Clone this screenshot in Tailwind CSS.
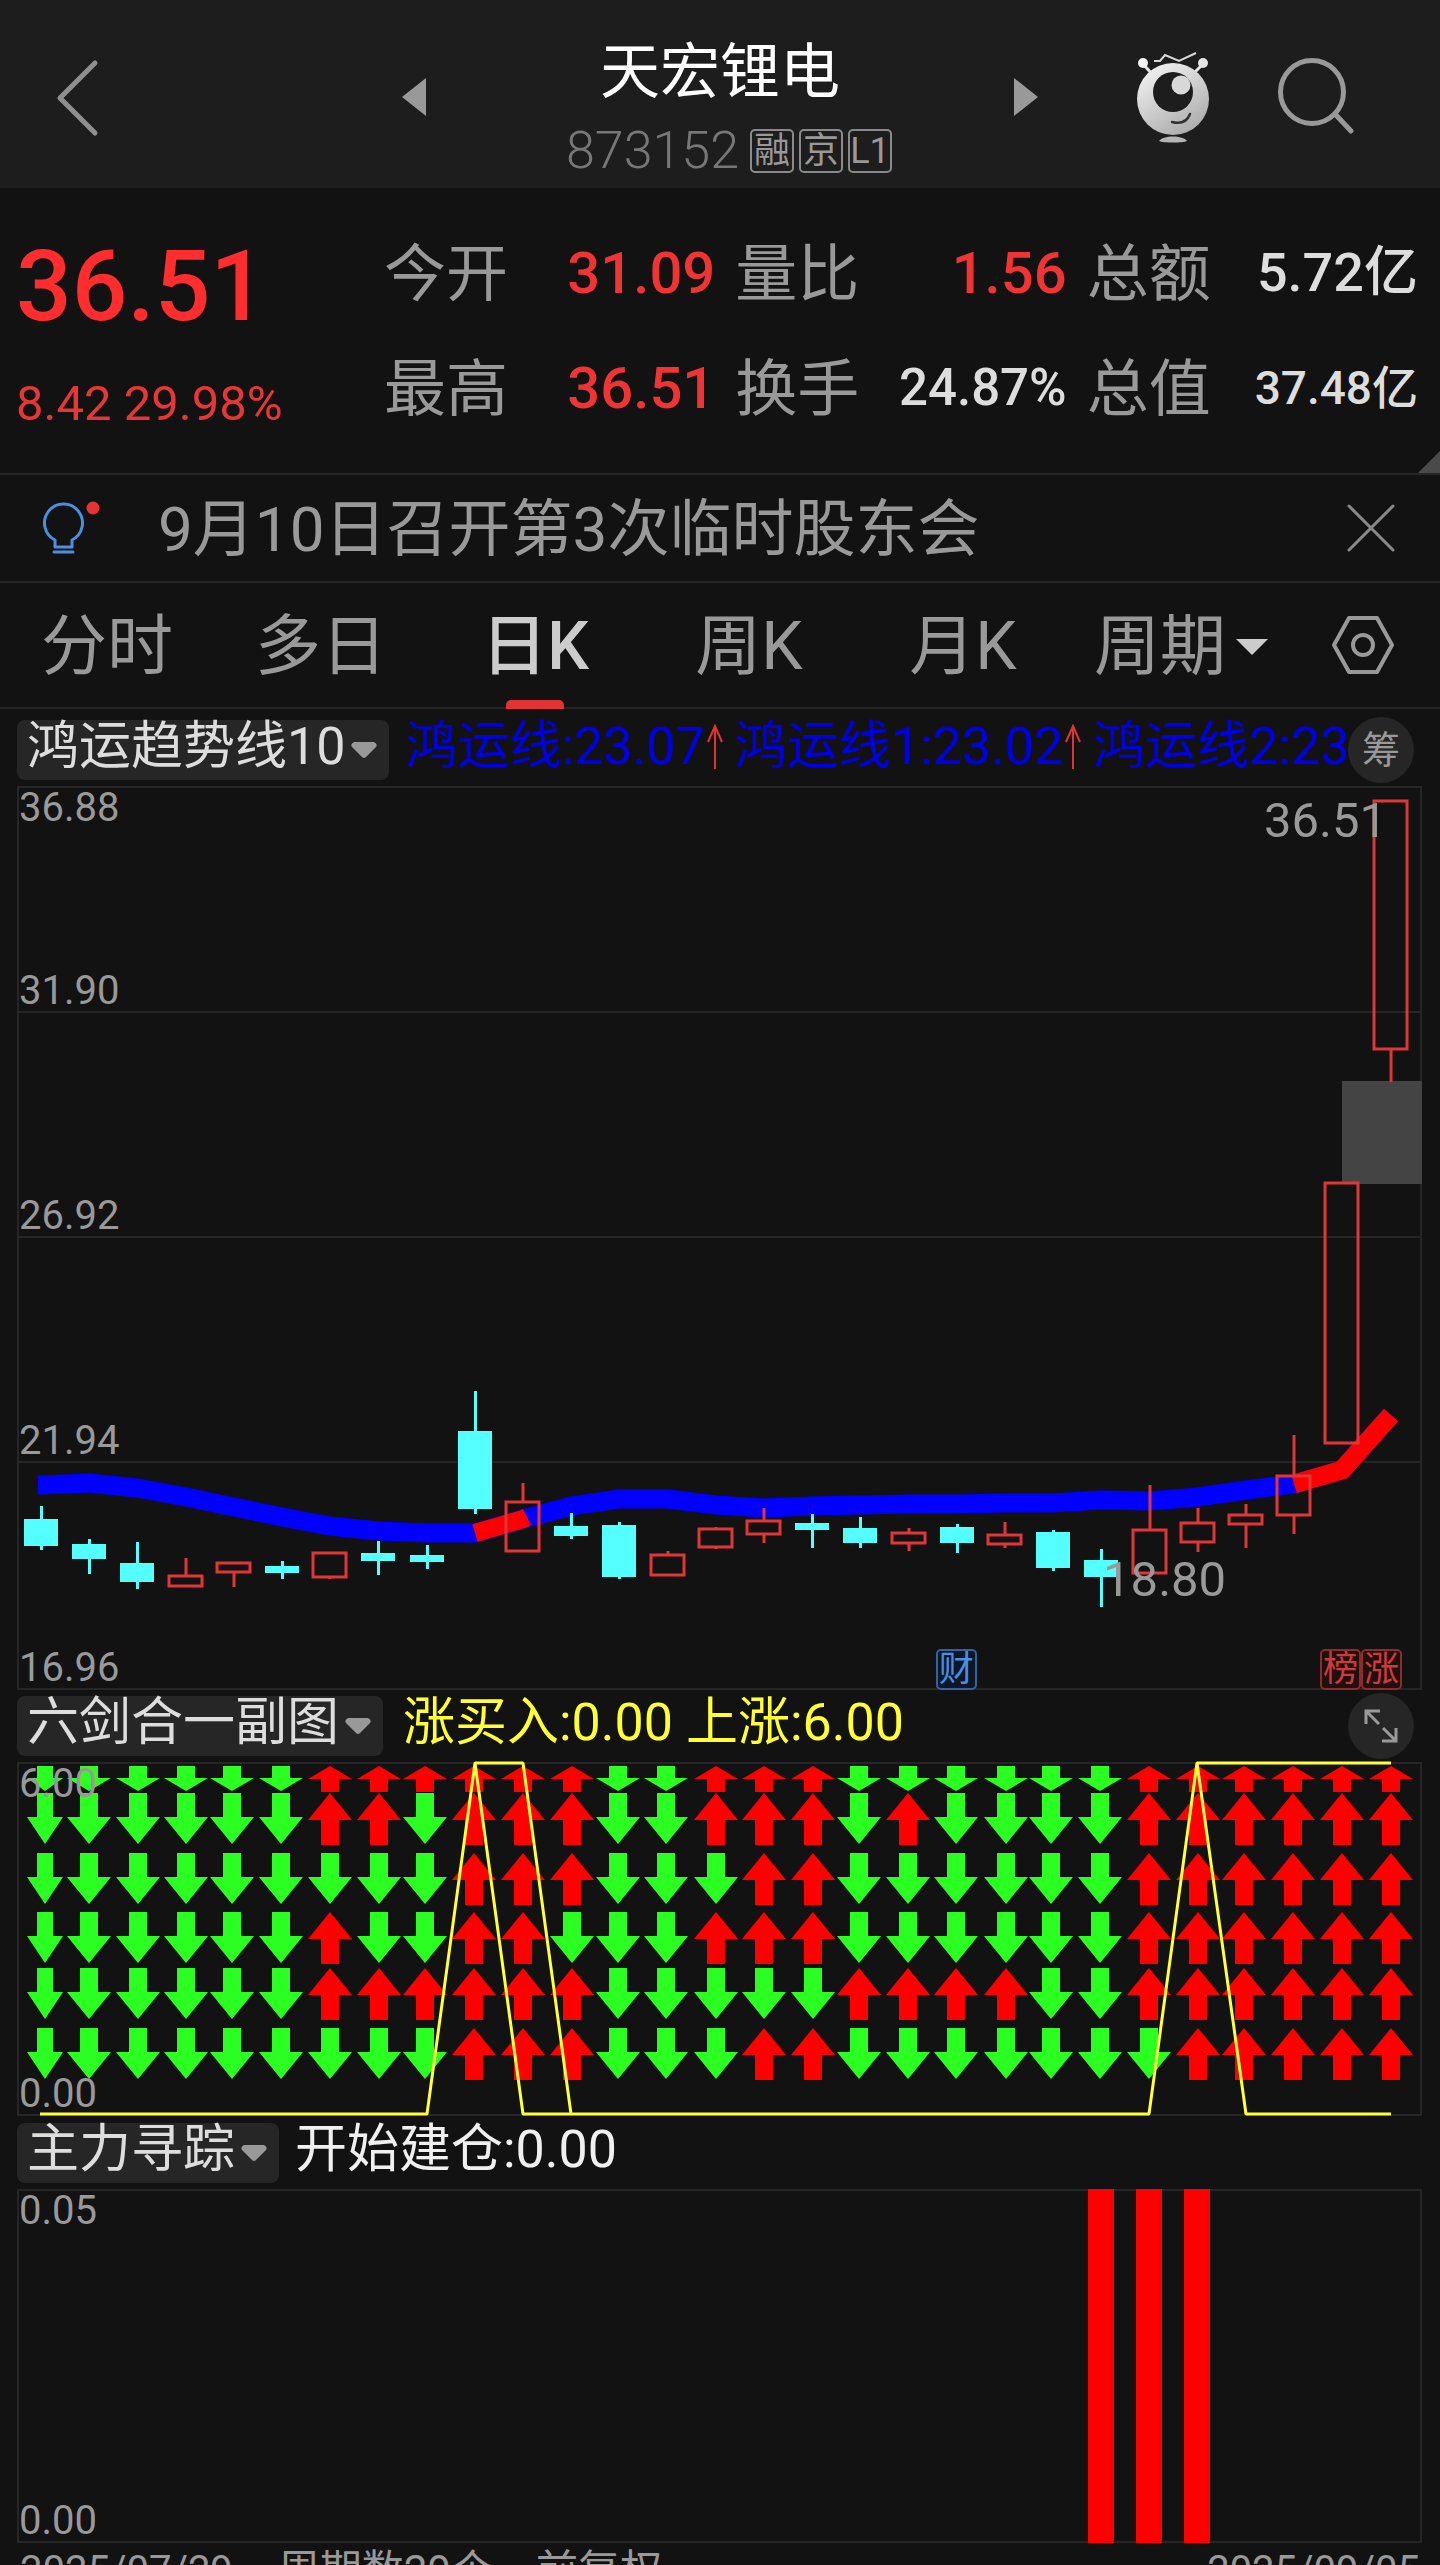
<!DOCTYPE html>
<html lang="zh-CN">
<head>
<meta charset="utf-8">
<meta name="viewport" content="width=device-width, initial-scale=1">
<title>天宏锂电 873152</title>
<script src="https://cdn.jsdelivr.net/npm/@tailwindcss/browser@4"></script>
</head>
<body class="bg-[#121212] h-screen overflow-hidden font-['Roboto','Noto_Sans_CJK_SC',sans-serif] text-[#999]">

<header class="h-[188px] pt-[6px] bg-[#1d1d1d] grid grid-cols-[400fr_640fr_400fr] items-center">
  <div class="pl-[54px]">
    <button aria-label="返回" class="block"><svg width="48" height="80" viewBox="0 0 48 80" fill="none" stroke="#8f8f8f" stroke-width="5" stroke-linecap="round" stroke-linejoin="round"><path d="M41 6 6 41l35 35"/></svg></button>
  </div>
  <div class="flex items-center justify-between">
    <button aria-label="上一只"><svg width="26" height="38" viewBox="0 0 26 38" fill="#999"><path d="M26 0v38L2 19z"/></svg></button>
    <div class="flex flex-col items-center gap-[12px] pt-[24px]">
      <h1 class="text-[60px] leading-[72px] text-white">天宏锂电</h1>
      <div class="flex items-center gap-[5px] pl-[18px]">
        <span class="text-[52px] leading-[60px] font-light text-[#777] pr-[6px]">873152</span>
        <span class="size-[44px] border-2 border-[#8a8a8a] rounded-[5px] text-[36px] leading-[40px] text-center">融</span>
        <span class="size-[44px] border-2 border-[#8a8a8a] rounded-[5px] text-[36px] leading-[40px] text-center">京</span>
        <span class="size-[44px] border-2 border-[#8a8a8a] rounded-[5px] text-[36px] leading-[40px] text-center">L1</span>
      </div>
    </div>
    <button aria-label="下一只"><svg width="26" height="38" viewBox="0 0 26 38" fill="#999"><path d="M0 0v38l24-19z"/></svg></button>
  </div>
  <div class="flex items-center justify-end gap-[60px] pr-[82px]">
    <button aria-label="智能助手">
      <svg width="90" height="96" viewBox="0 0 90 96">
        <defs><linearGradient id="bot" x1="0.2" y1="0" x2="0.8" y2="1"><stop offset="0" stop-color="#f2f2f2"/><stop offset="1" stop-color="#a8a8a8"/></linearGradient></defs>
        <path d="M26 12h6l5-6 14 6 17-8" fill="none" stroke="#d8d8d8" stroke-width="2"/>
        <path d="M16 16l8 9M74 16l-9 9" stroke="#e6e6e6" stroke-width="3"/>
        <circle cx="15" cy="14" r="5" fill="#f2f2f2"/><circle cx="75" cy="14" r="5" fill="#e6e6e6"/>
        <circle cx="45" cy="50" r="36" fill="url(#bot)"/>
        <circle cx="45" cy="43" r="20" fill="#1d1d1d"/>
        <circle cx="53" cy="36" r="9.500" fill="#d8d8d8"/>
        <path d="M44 73c8 2 15 0 18-8" fill="none" stroke="#333" stroke-width="2.500" stroke-linecap="round"/>
        <path d="M31 92c4-6 24-6 28 0-4 2-24 2-28 0z" fill="#b5b5b5"/>
      </svg>
    </button>
    <button aria-label="搜索"><svg width="80" height="80" viewBox="0 0 80 80" fill="none" stroke="#999" stroke-width="5" stroke-linecap="round"><circle cx="34" cy="35" r="31.500"/><path d="M57 57l16 17"/></svg></button>
  </div>
</header>

<section class="relative h-[287px] border-b-2 border-[#262626] pt-[45px] pl-[16px] pr-[22px] flex">
  <div class="w-[368px] shrink-0">
    <p class="text-[98px] leading-[100px] pt-[4px] font-medium text-[#ff2d2d]">36.51</p>
    <p class="text-[49px] leading-[60px] pt-[37px] text-[#e63636]">8.42 29.98%</p>
  </div>
  <dl class="grow grid grid-cols-3 gap-x-[20px] gap-y-[31px] content-start text-[62px] leading-[80px] whitespace-nowrap">
    <div class="flex justify-between items-center"><dt>今开</dt><dd class="pb-[4px] text-[58px] font-medium text-[#f03333]">31.09</dd></div>
    <div class="flex justify-between items-center"><dt>量比</dt><dd class="pb-[4px] text-[58px] font-medium text-[#f03333]">1.56</dd></div>
    <div class="flex justify-between items-center"><dt>总额</dt><dd class="pb-[4px] text-[54px] font-medium text-[#ddd]">5.72亿</dd></div>
    <div class="flex justify-between items-center"><dt>最高</dt><dd class="pb-[4px] text-[58px] font-medium text-[#f03333]">36.51</dd></div>
    <div class="flex justify-between items-center"><dt>换手</dt><dd class="pb-[4px] text-[51px] font-medium text-[#ddd]">24.87%</dd></div>
    <div class="flex justify-between items-center"><dt>总值</dt><dd class="pb-[4px] text-[46px] font-medium text-[#ddd]">37.48亿</dd></div>
  </dl>
  <svg class="absolute right-0 bottom-0" width="22" height="22" viewBox="0 0 22 22" fill="#4a4a4a"><path d="M22 0v22H0z"/></svg>
</section>

<section class="h-[108px] border-b-2 border-[#262626] flex items-center pl-[38px] pr-[44px]">
  <svg class="mr-[56px] shrink-0" width="64" height="64" viewBox="0 0 64 64" fill="none" stroke="#4a8fe0" stroke-width="3" stroke-linejoin="round" stroke-linecap="round"><path d="M17 51v-7A19 19 0 1 1 34 44v7zM16 56h19"/><circle cx="55" cy="12" r="6.500" fill="#e63434" stroke="none"/></svg>
  <a href="#" class="grow pt-[4px] text-[62px] leading-[80px] whitespace-nowrap">9月10日召开第3次临时股东会</a>
  <button aria-label="关闭"><svg width="50" height="50" viewBox="0 0 50 50" stroke="#888" stroke-width="3" stroke-linecap="round"><path d="M3 3l44 44M47 3 3 47"/></svg></button>
</section>

<nav class="h-[126px] border-b-2 border-[#262626] grid grid-cols-[214fr_214fr_214fr_214fr_214fr_222fr_148fr] text-[66px] leading-[80px] whitespace-nowrap">
  <button class="pt-[4px]">分时</button>
  <button class="pt-[4px]">多日</button>
  <button class="pt-[4px] relative font-medium text-[#ccc]">日K<span class="absolute -bottom-[2px] left-1/2 -translate-x-1/2 w-[58px] h-[9px] rounded-t-[5px] bg-[#e03434]"></span></button>
  <button class="pt-[4px]">周K</button>
  <button class="pt-[4px]">月K</button>
  <button class="pt-[4px] flex items-center justify-center gap-[10px]">周期<svg width="32" height="16" viewBox="0 0 32 16" fill="#ccc"><path d="M0 0h32L16 16z"/></svg></button>
  <button aria-label="设置" class="flex items-center justify-center pr-[6px]"><svg width="64" height="60" viewBox="0 0 64 60" fill="none" stroke="#999" stroke-width="4" stroke-linejoin="round"><path d="M18 3h28l15 27-15 27H18L3 30z"/><circle cx="32" cy="30" r="10"/></svg></button>
</nav>

<section class="pl-[17px] pr-[18px]">
  <div class="relative h-[77px] flex items-center gap-[16px] text-[52px] leading-[60px] whitespace-nowrap overflow-hidden pt-[4px]">
    <button class="h-[60px] rounded-[8px] bg-[#262626] text-[#ddd] flex items-center gap-[6px] pl-[10px] pr-[12px] shrink-0"><span class="pb-[6px]">鸿运趋势线10</span><svg width="26" height="16" viewBox="0 0 26 16" fill="#999"><path d="M3 0h20q4 2 2 5L15 15q-2 2-4 0L1 5q-2-3 2-5z"/></svg></button>
    <div class="flex items-center gap-[12px] pb-[6px] text-[#0000e6]">
      <span class="flex items-center gap-[2px]">鸿运线:23.07<svg width="16" height="46" viewBox="0 0 16 46" fill="none" stroke="#e03434" stroke-width="2"><path d="M8 45V2M1 18 8 2l7 16"/></svg></span>
      <span class="flex items-center gap-[2px]">鸿运线1:23.02<svg width="16" height="46" viewBox="0 0 16 46" fill="none" stroke="#e03434" stroke-width="2"><path d="M8 45V2M1 18 8 2l7 16"/></svg></span>
      <span>鸿运线2:23</span>
    </div>
    <button class="absolute right-[8px] top-[8px] size-[66px] rounded-full bg-[#262626] text-[#999] text-[38px] leading-[66px]">筹</button>
  </div>

  <div class="relative h-[904px] text-[40px] leading-[40px]">
    <div class="h-full border-2 border-[#262626] grid grid-rows-4">
      <div class="border-b-2 border-[#262626] flex flex-col justify-between"><span>36.88</span><span>31.90</span></div>
      <div class="border-b-2 border-[#262626] flex items-end"><span>26.92</span></div>
      <div class="border-b-2 border-[#262626] flex items-end"><span>21.94</span></div>
      <div class="flex items-end"><span>16.96</span></div>
    </div>
    <svg id="kline" class="absolute inset-0 size-full" viewBox="17 786 1405 904" preserveAspectRatio="none" aria-label="日K线"></svg>
    <span class="absolute right-[35px] top-[10px] text-[49px] leading-[50px]">36.51</span>
    <span class="absolute left-[77.300%] top-[769px] text-[49px] leading-[50px]">18.80</span>
    <span class="absolute left-[65.400%] bottom-0 size-[41px] border-2 border-[#34639c] rounded-[5px] bg-[#0b1626] text-[#4a8fe0] text-[35px] leading-[37px] text-center">财</span>
    <div class="absolute right-[20px] bottom-0 flex text-[35px] leading-[37px] text-center text-[#d03a3a]">
      <span class="size-[41px] border-2 border-[#8e2c2c] rounded-[5px] bg-[#1f0f0f]">榜</span>
      <span class="size-[41px] border-2 border-[#8e2c2c] rounded-[5px] bg-[#1f0f0f]">涨</span>
    </div>
  </div>
</section>

<section class="pl-[17px] pr-[18px]">
  <div class="h-[72px] flex items-center gap-[20px] text-[52px] leading-[60px] whitespace-nowrap">
    <button class="h-[60px] rounded-[8px] bg-[#262626] text-[#ddd] flex items-center gap-[6px] pl-[10px] pr-[12px]"><span class="pb-[6px]">六剑合一副图</span><svg width="26" height="16" viewBox="0 0 26 16" fill="#999"><path d="M3 0h20q4 2 2 5L15 15q-2 2-4 0L1 5q-2-3 2-5z"/></svg></button>
    <span class="grow pb-[6px] text-[#ffff33]">涨买入:0.00 上涨:6.00</span>
    <button aria-label="展开" class="size-[66px] mr-[8px] rounded-full bg-[#262626] flex items-center justify-center"><svg width="34" height="34" viewBox="0 0 34 34" fill="none" stroke="#999" stroke-width="3"><path d="M2 15V2h14M2 2l13 13M32 19v13H18M32 32 19 19"/></svg></button>
  </div>
  <div class="relative h-[354px] outline-2 -outline-offset-2 outline-[#262626] text-[40px] leading-[40px]">
    <svg id="swords" class="absolute inset-0 size-full overflow-visible" viewBox="17 1762 1405 354" preserveAspectRatio="none" aria-label="六剑合一"></svg>
    <div class="relative h-full flex flex-col justify-between px-[2px] py-[2px]"><span>6.00</span><span>0.00</span></div>
  </div>
</section>

<section class="pl-[17px] pr-[18px]">
  <div class="h-[73px] flex items-center gap-[16px] text-[52px] leading-[60px] whitespace-nowrap">
    <button class="h-[60px] rounded-[8px] bg-[#262626] text-[#ddd] flex items-center gap-[6px] pl-[10px] pr-[12px]"><span class="pb-[6px]">主力寻踪</span><svg width="26" height="16" viewBox="0 0 26 16" fill="#999"><path d="M3 0h20q4 2 2 5L15 15q-2 2-4 0L1 5q-2-3 2-5z"/></svg></button>
    <span class="pb-[6px] text-[#f0f0f0]">开始建仓:0.00</span>
  </div>
  <div class="relative h-[354px] text-[40px] leading-[40px]">
    <div class="h-full border-2 border-[#262626] flex flex-col justify-between"><span>0.05</span><span>0.00</span></div>
    <svg class="absolute inset-0 size-full" viewBox="17 2189 1405 354" preserveAspectRatio="none" fill="#f00" aria-label="主力寻踪"><path d="M1088 2189h26v354h-26zM1136 2189h26v354h-26zM1184 2189h26v354h-26z"/></svg>
  </div>
</section>

<footer class="px-[20px] pt-[8px] flex text-[40px] leading-[40px] whitespace-nowrap">
  <span>2025/07/29</span>
  <span class="pl-[45px] text-[42px]">周期数29个</span>
  <span class="pl-[43px] text-[42px]">前复权</span>
  <span class="ml-auto">2025/09/05</span>
</footer>

<script>
const colX = i => 41 + Math.round(48.2 * i);

// Candles: kind (d = falling, u = rising), body top, body bottom, high, low
const candles = [
  ['d',1519,1546,1506,1550],['d',1544,1559,1539,1574],['d',1563,1582,1542,1589],['u',1575,1587,1558,1587],
  ['u',1562,1573,1562,1587],['d',1566,1573,1561,1579],['u',1552,1578,1552,1579],['d',1553,1561,1541,1575],
  ['d',1555,1562,1545,1569],['d',1431,1509,1391,1514],['u',1501,1552,1483,1552],['d',1526,1536,1513,1539],
  ['d',1525,1577,1522,1579],['u',1554,1576,1551,1576],['u',1528,1548,1527,1549],['u',1520,1535,1508,1543],
  ['d',1523,1530,1514,1548],['d',1528,1543,1517,1548],['u',1532,1544,1528,1551],['d',1527,1543,1524,1553],
  ['u',1534,1545,1522,1548],['d',1532,1568,1530,1571],['d',1560,1577,1549,1607],['u',1529,1574,1485,1574],
  ['u',1522,1543,1508,1552],['u',1514,1525,1504,1548],['u',1475,1516,1435,1534],['u',1182,1444,1182,1444],
  ['u',800,1050,800,1082]
];
const trend = [1485,1483,1488,1497,1507,1517,1526,1531,1533,1533,1519,1506,1499,1499,1505,1508,1506,1505,1504,1504,1503,1503,1500,1501,1497,1490,1484,1470,1415];

const line = (from, to) => trend.slice(from, to + 1).map((y, k) => colX(from + k) + ',' + y).join(' ');
let k = '<polyline points="38,1485 ' + line(0, 28) + '" fill="none" stroke="#00f" stroke-width="19"/>';
k += '<polyline points="' + line(9, 10) + ' 527,1517" fill="none" stroke="#f00" stroke-width="18"/>';
k += '<polyline points="' + line(26, 28) + '" fill="none" stroke="#f00" stroke-width="19"/>';
k += '<rect x="1342" y="1081" width="80" height="103" fill="#444"/>';
candles.forEach(([kind, top, bottom, high, low], i) => {
  const x = colX(i);
  if (kind === 'd') {
    k += `<rect x="${x - 17}" y="${top}" width="34" height="${bottom - top}" fill="#54ffff"/><rect x="${x - 1}" y="${high}" width="3" height="${low - high}" fill="#54ffff"/>`;
  } else {
    k += `<rect x="${x - 17}" y="${top + 1}" width="33" height="${bottom - top - 2}" fill="none" stroke="#e03636" stroke-width="3"/>`;
    k += `<path d="M${x} ${high}V${top}M${x} ${bottom}V${low}" stroke="#e03636" stroke-width="3"/>`;
  }
});
document.getElementById('kline').innerHTML = k;

// Six signal rows, one letter per trading day
const arrowX = [45,89,138,186,232,281,330,379,425,474,523,572,618,666,716,764,813,859,908,956,1006,1051,1100,1149,1198,1244,1293,1342,1391];
const rows = [
  [1766, 25, 'DDDDDDUUUUUUDDUUUDDDDDDUUUUUU'],
  [1793, 51, 'DDDDDDUUDUUUDDUUUDUDDDDUUUUUU'],
  [1853, 51, 'DDDDDDDDDUUUDDDUUDDDDDDUUUUUU'],
  [1912, 51, 'DDDDDDUDDUUDDDUUUDDDDDDUUUUUU'],
  [1968, 51, 'DDDDDDUUUUUUDDDDDUUUUDDUUUUUU'],
  [2028, 51, 'DDDDDDDDDUUUDDDUUDDDDDDDUUUUU']
];
let s = '';
rows.forEach(([y, h, dirs]) => [...dirs].forEach((d, i) => {
  const x = arrowX[i], w = i ? 22 : 18, shaft = i ? 9 : 8, half = Math.round(h * 0.47);
  s += d === 'D'
    ? `<path d="M${x - shaft} ${y}h${2 * shaft}v${half}h${w - shaft}L${x} ${y + h}L${x - w} ${y + half}h${w - shaft}z" fill="#2bff22"/>`
    : `<path d="M${x - shaft} ${y + h + 1}h${2 * shaft}V${y + h - half}h${w - shaft}L${x} ${y}L${x - w} ${y + h - half}h${w - shaft}z" fill="#f00"/>`;
}));
s += '<path d="M40 2114H427L475 1763H523L571 2114M475 1763L523 2114H1149L1197 1763H1391M1197 1763L1246 2114H1391" fill="none" stroke="#ffff3c" stroke-width="3" stroke-linejoin="bevel"/>';
document.getElementById('swords').innerHTML = s;
</script>
</body>
</html>
